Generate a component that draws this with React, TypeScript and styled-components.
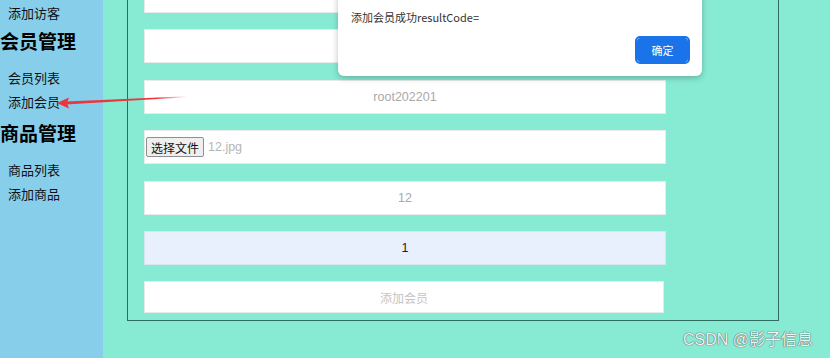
import React from "react";
import styled, { createGlobalStyle } from "styled-components";

const GlobalStyle = createGlobalStyle`
  html, body {
    margin: 0;
    padding: 0;
  }
  body {
    font-family: "Liberation Sans", "Noto Sans CJK SC", sans-serif;
    overflow: hidden;
  }
`;

const Page = styled.div`
  position: relative;
  display: flex;
  width: 830px;
  height: 358px;
  overflow: hidden;
`;

const Sidebar = styled.nav`
  width: 103px;
  flex-shrink: 0;
  background: #87ceeb;
  padding-top: 1px;
  font-family: "Noto Sans CJK SC", sans-serif;
`;

const NavItem = styled.div`
  height: 24px;
  line-height: 24px;
  padding-left: 8px;
  font-size: 13px;
  color: #111;
`;

const NavHeading = styled.h2`
  margin: ${(p: { $top: number }) => p.$top}px 0 11px;
  height: 28px;
  line-height: 28px;
  font-size: 19px;
  font-weight: 700;
  color: #000;
`;

const Main = styled.main`
  flex: 1;
  background: #87ebd4;
  padding-left: 24px;
`;

const Frame = styled.div`
  width: 634px;
  margin-top: -40px;
  padding: 18px 0 7px 16px;
  border: 1px solid #2f6b5e;
  display: flex;
  flex-direction: column;
  gap: 16.4px;
`;

const Field = styled.div<{ $filled?: boolean; $dark?: boolean }>`
  box-sizing: border-box;
  width: 522px;
  height: 34px;
  display: flex;
  align-items: center;
  justify-content: center;
  background: ${(p) => (p.$filled ? "#e8f0fe" : "#fff")};
  border: 1px solid ${(p) => (p.$filled ? "#d4e6f0" : "#e6ecea")};
  font-size: 12.5px;
  color: ${(p) => (p.$dark ? "#222" : "#a9a9a9")};
`;

const FileField = styled(Field)`
  justify-content: flex-start;
  padding-left: 1px;
  gap: 4px;
  color: #b5b5b5;
`;

const SubmitField = styled(Field)`
  width: 520px;
  height: 32px;
`;

const FileButton = styled.span`
  box-sizing: border-box;
  height: 20px;
  padding: 0 4px;
  display: flex;
  align-items: center;
  background: #efefef;
  border: 1px solid #8f8f8f;
  border-radius: 2px;
  font-family: "Noto Sans CJK SC", sans-serif;
  font-size: 12px;
  color: #111;
`;

const SubmitLabel = styled.span`
  font-family: "Noto Sans CJK SC", sans-serif;
  font-size: 12px;
  color: #c4c4c4;
`;

const Dialog = styled.div`
  position: absolute;
  left: 338px;
  top: -10px;
  width: 364px;
  height: 86px;
  box-sizing: border-box;
  padding: 19px 13px 13px;
  background: #fff;
  border-radius: 6px;
  box-shadow: 0 2px 6px rgba(0, 0, 0, 0.25);
  display: flex;
  flex-direction: column;
  justify-content: space-between;
`;

const Message = styled.div`
  font-family: "Noto Sans CJK SC", sans-serif;
  font-size: 11px;
  color: #333;
`;

const Footer = styled.div`
  display: flex;
  justify-content: flex-end;
`;

const OkButton = styled.button`
  width: 53px;
  height: 26px;
  border: 1px solid #fff;
  outline: 2px solid #1a73e8;
  outline-offset: -1px;
  border-radius: 4px;
  background: #1a73e8;
  color: #fff;
  font-family: "Noto Sans CJK SC", sans-serif;
  font-size: 11px;
  padding: 0;
`;

const Watermark = styled.div`
  position: absolute;
  right: 17px;
  bottom: 8px;
  font-family: "Liberation Sans", "Noto Sans CJK SC", sans-serif;
  font-size: 16px;
  color: #f2f2f2;
  text-shadow: 0 0 1px #555, 0 0 1px #555;
`;

const Arrow = styled.svg`
  position: absolute;
  left: 0;
  top: 0;
  pointer-events: none;
`;

export default function App() {
  return (
    <>
      <GlobalStyle />
      <Page>
        <Sidebar>
          <NavItem>添加访客</NavItem>
          <NavHeading $top={2}>会员管理</NavHeading>
          <NavItem>会员列表</NavItem>
          <NavItem>添加会员</NavItem>
          <NavHeading $top={5}>商品管理</NavHeading>
          <NavItem>商品列表</NavItem>
          <NavItem>添加商品</NavItem>
        </Sidebar>
        <Main>
          <Frame>
            <Field />
            <Field />
            <Field>root202201</Field>
            <FileField>
              <FileButton>选择文件</FileButton>
              12.jpg
            </FileField>
            <Field>12</Field>
            <Field $filled $dark>1</Field>
            <SubmitField>
              <SubmitLabel>添加会员</SubmitLabel>
            </SubmitField>
          </Frame>
        </Main>

        <Arrow width="200" height="120" viewBox="0 0 200 120">
          <defs>
            <linearGradient id="fade" x1="0" x2="1" y1="0" y2="0">
              <stop offset="0" stopColor="#e8383d" />
              <stop offset="0.75" stopColor="#e8383d" />
              <stop offset="1" stopColor="#e8383d" stopOpacity="0" />
            </linearGradient>
          </defs>
          <polygon points="66,101.5 187,96.3 187,97.3 66,104.5" fill="url(#fade)" />
          <polygon points="57,103 69,97.5 67,103 69,108.5" fill="#e8383d" />
        </Arrow>

        <Dialog>
          <Message>添加会员成功resultCode=</Message>
          <Footer>
            <OkButton>确定</OkButton>
          </Footer>
        </Dialog>

        <Watermark>CSDN @影子信息</Watermark>
      </Page>
    </>
  );
}
